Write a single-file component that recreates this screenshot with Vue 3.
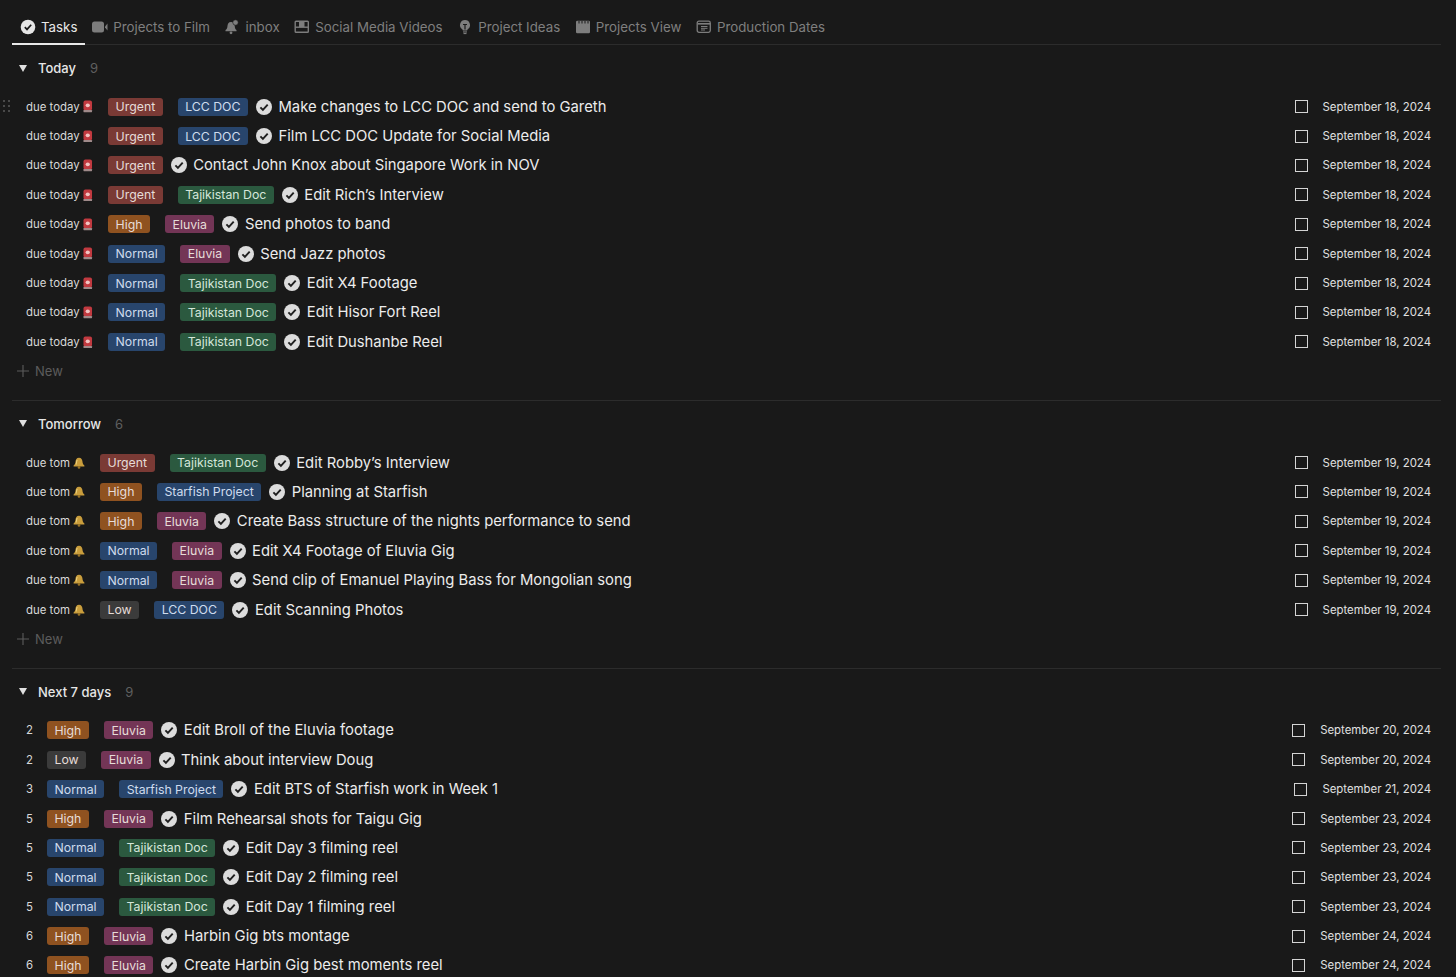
<template>
  <div class="page">
    <nav class="tabs">
      <div v-for="tab in tabs" :key="tab.name" class="tab" :class="{ active: tab.active }">
        <svg class="tab-icon" viewBox="0 0 16 16" v-html="tab.icon"></svg>
        <span>{{ tab.name }}</span>
      </div>
    </nav>

    <section v-for="group in groups" :key="group.name" class="group">
      <header class="group-head">
        <span class="caret"></span>
        <span class="group-name">{{ group.name }}</span>
        <span class="group-count">{{ group.rows.length }}</span>
      </header>

      <div class="rows">
        <div v-for="(row, i) in group.rows" :key="i" class="row">
          <span v-if="group.name === 'Today' && i === 0" class="grip">
            <i></i><i></i><i></i><i></i><i></i><i></i>
          </span>
          <span class="due" :class="{ num: !group.kind }">
            {{ row.due || group.due }}
            <svg v-if="group.kind === 'siren'" class="emoji siren" viewBox="0 0 10 13">
              <rect x="0.5" y="0.5" width="9" height="10.5" rx="2" fill="#c23a40" />
              <ellipse cx="5" cy="5.5" rx="2.2" ry="2" fill="#f2c4c2" />
              <rect x="0.5" y="10.5" width="9" height="2.2" rx="0.5" fill="#a08a8a" />
            </svg>
            <svg v-if="group.kind === 'bell'" class="emoji bell" viewBox="0 0 12 12">
              <path d="M6 .8c2.400 0 3.300 1.800 3.500 4 .1 1.600.6 2.600 1.900 3.800v1H.6v-1c1.300-1.200 1.800-2.200 1.900-3.800C2.700 2.600 3.600.8 6 .8z" fill="#c99d3c" />
              <path d="M4.200 3c-.7 1-.6 3-1 4.500" stroke="#f0d98a" stroke-width="0.9" fill="none" />
              <circle cx="6" cy="10.4" r="1.3" fill="#9a7426" />
            </svg>
          </span>
          <span class="tag" :class="priorityColor[row.p]">{{ row.p }}</span>
          <span v-if="row.t" class="tag project" :class="projectColor[row.t]">{{ row.t }}</span>
          <svg class="check" viewBox="0 0 16 16">
            <circle cx="8" cy="8" r="8" fill="#dcdcdc" />
            <path d="M4.4 8.300l2.500 2.500 4.800-5.200" fill="none" stroke="#1f1f1f" stroke-width="1.9" />
          </svg>
          <span class="title">{{ row.title }}</span>
          <span class="spacer"></span>
          <span class="box"></span>
          <span class="date">{{ row.date || group.date }}</span>
        </div>
      </div>

      <div v-if="group.hasNew" class="new-row">
        <svg class="plus" viewBox="0 0 12 12"><path d="M6 0v12M0 6h12" stroke="#5c5c5c" stroke-width="1.1" /></svg>
        <span>New</span>
      </div>
    </section>
  </div>
</template>

<script setup>
const tabs = [
  {
    name: 'Tasks',
    active: true,
    icon: '<circle cx="8" cy="8" r="7.3" fill="#e6e6e6"/><path d="M4.800 8.200l2.200 2.200 4.200-4.600" fill="none" stroke="#191919" stroke-width="1.7"/>',
  },
  {
    name: 'Projects to Film',
    icon: '<rect x="0" y="2.500" width="12" height="11" rx="2.500" fill="#7d7d7d"/><path d="M13 7.500L15.500 4.500v7L13 8.500z" fill="#7d7d7d"/>',
  },
  {
    name: 'inbox',
    icon: '<path d="M7 3c-2.500 0-3.400 2-3.600 4.500C3.300 9.300 2.500 10.300 1.500 11v1.200h11V11c-1-.7-1.600-1.700-1.700-3.500C10.600 5 9.500 3 7 3z" fill="#7d7d7d"/><circle cx="11.500" cy="3.500" r="2.700" fill="#7d7d7d" stroke="#191919" stroke-width="0.6"/><circle cx="7" cy="13.800" r="1.400" fill="#7d7d7d"/>',
  },
  {
    name: 'Social Media Videos',
    icon: '<rect x="1.200" y="2.200" width="13.100" height="11.100" rx="0.8" fill="none" stroke="#7d7d7d" stroke-width="1.4"/><path d="M1.500 8.200h13" stroke="#7d7d7d" stroke-width="1.4"/><rect x="5" y="2.500" width="5.500" height="5.500" fill="#7d7d7d"/>',
  },
  {
    name: 'Project Ideas',
    icon: '<path d="M8 1a5 5 0 0 0-3 9c.6.500.8 1 .8 1.600h4.400c0-.6.200-1.100.8-1.600a5 5 0 0 0-3-9z" fill="#7d7d7d"/><path d="M6 5.500h4M8 5.500v5" stroke="#191919" stroke-width="1.2"/><rect x="6" y="12.400" width="4" height="1.100" fill="#7d7d7d"/><rect x="6.500" y="14" width="3" height="1.100" fill="#7d7d7d"/>',
  },
  {
    name: 'Projects View',
    icon: '<rect x="1" y="1.800" width="14" height="12.500" rx="1.200" fill="#7d7d7d"/><path d="M4 2v2.500M7 2v2.500M10 2v2.500M13 2v2.500" stroke="#191919" stroke-width="1"/>',
  },
  {
    name: 'Production Dates',
    icon: '<rect x="1.200" y="2.200" width="13.100" height="11.100" rx="1.800" fill="none" stroke="#7d7d7d" stroke-width="1.3"/><path d="M1.500 4.800h13" stroke="#7d7d7d" stroke-width="1.6"/><path d="M5 7.500h6.500M5 9.300h6.500M5 11h4" stroke="#7d7d7d" stroke-width="1"/>',
  },
]

const priorityColor = { Urgent: 'red', High: 'orange', Normal: 'blue', Low: 'gray' }
const projectColor = {
  'LCC DOC': 'blue',
  'Tajikistan Doc': 'green',
  Eluvia: 'pink',
  'Starfish Project': 'blue',
}

const groups = [
  {
    name: 'Today',
    due: 'due today',
    kind: 'siren',
    date: 'September 18, 2024',
    hasNew: true,
    rows: [
      { p: 'Urgent', t: 'LCC DOC', title: 'Make changes to LCC DOC and send to Gareth' },
      { p: 'Urgent', t: 'LCC DOC', title: 'Film LCC DOC Update for Social Media' },
      { p: 'Urgent', title: 'Contact John Knox about Singapore Work in NOV' },
      { p: 'Urgent', t: 'Tajikistan Doc', title: 'Edit Rich’s Interview' },
      { p: 'High', t: 'Eluvia', title: 'Send photos to band' },
      { p: 'Normal', t: 'Eluvia', title: 'Send Jazz photos' },
      { p: 'Normal', t: 'Tajikistan Doc', title: 'Edit X4 Footage' },
      { p: 'Normal', t: 'Tajikistan Doc', title: 'Edit Hisor Fort Reel' },
      { p: 'Normal', t: 'Tajikistan Doc', title: 'Edit Dushanbe Reel' },
    ],
  },
  {
    name: 'Tomorrow',
    due: 'due tom',
    kind: 'bell',
    date: 'September 19, 2024',
    hasNew: true,
    rows: [
      { p: 'Urgent', t: 'Tajikistan Doc', title: 'Edit Robby’s Interview' },
      { p: 'High', t: 'Starfish Project', title: 'Planning at Starfish' },
      { p: 'High', t: 'Eluvia', title: 'Create Bass structure of the nights performance to send' },
      { p: 'Normal', t: 'Eluvia', title: 'Edit X4 Footage of Eluvia Gig' },
      { p: 'Normal', t: 'Eluvia', title: 'Send clip of Emanuel Playing Bass for Mongolian song' },
      { p: 'Low', t: 'LCC DOC', title: 'Edit Scanning Photos' },
    ],
  },
  {
    name: 'Next 7 days',
    rows: [
      { due: '2', p: 'High', t: 'Eluvia', title: 'Edit Broll of the Eluvia footage', date: 'September 20, 2024' },
      { due: '2', p: 'Low', t: 'Eluvia', title: 'Think about interview Doug', date: 'September 20, 2024' },
      { due: '3', p: 'Normal', t: 'Starfish Project', title: 'Edit BTS of Starfish work in Week 1', date: 'September 21, 2024' },
      { due: '5', p: 'High', t: 'Eluvia', title: 'Film Rehearsal shots for Taigu Gig', date: 'September 23, 2024' },
      { due: '5', p: 'Normal', t: 'Tajikistan Doc', title: 'Edit Day 3 filming reel', date: 'September 23, 2024' },
      { due: '5', p: 'Normal', t: 'Tajikistan Doc', title: 'Edit Day 2 filming reel', date: 'September 23, 2024' },
      { due: '5', p: 'Normal', t: 'Tajikistan Doc', title: 'Edit Day 1 filming reel', date: 'September 23, 2024' },
      { due: '6', p: 'High', t: 'Eluvia', title: 'Harbin Gig bts montage', date: 'September 24, 2024' },
      { due: '6', p: 'High', t: 'Eluvia', title: 'Create Harbin Gig best moments reel', date: 'September 24, 2024' },
    ],
  },
]
</script>

<style scoped>
.page {
  height: 977px;
  overflow: hidden;
  padding: 0 15px 0 12px;
  box-sizing: border-box;
  font-family: Inter, "Liberation Sans", sans-serif;
  color: rgba(255, 255, 255, 0.86);
}

.tabs {
  display: flex;
  height: 45px;
  padding-top: 10px;
  box-sizing: border-box;
  border-bottom: 1px solid #2c2c2c;
}

.tab {
  display: flex;
  align-items: center;
  gap: 5px;
  height: 35px;
  padding: 0 7.3px 2px;
  box-sizing: border-box;
  font-size: 13.3px;
  color: #7f7f7f;
  white-space: nowrap;
}

.tab.active {
  color: #e8e8e8;
  border-bottom: 2px solid #e8e8e8;
  padding: 0 7.5px 0 8px;
}

.tab-icon {
  width: 16px;
  height: 16px;
  flex: none;
}

.group {
  border-bottom: 1px solid #2c2c2c;
}

.group:last-child {
  border-bottom: none;
}

.group-head {
  display: flex;
  align-items: center;
  height: 24px;
  margin-top: 11px;
  margin-bottom: 12px;
  padding-left: 7px;
  font-size: 13px;
}

.caret {
  width: 0;
  height: 0;
  border-left: 4px solid transparent;
  border-right: 4px solid transparent;
  border-top: 7px solid #e0e0e0;
  margin-right: 11px;
}

.group-name {
  color: #e6e6e6;
  font-weight: 500;
}

.group-count {
  margin-left: 14px;
  color: #5f5f5f;
}

.row {
  display: flex;
  align-items: center;
  height: 29.4px;
  position: relative;
  padding-left: 14px;
  padding-right: 10px;
}

.grip {
  position: absolute;
  left: -9px;
  top: 8px;
  display: grid;
  grid-template-columns: 2px 2px;
  gap: 3px;
}

.grip i {
  width: 2px;
  height: 2px;
  border-radius: 50%;
  background: #5a5a5a;
}

.due {
  display: flex;
  align-items: center;
  gap: 3.5px;
  margin-right: 15.5px;
  font-size: 11.4px;
  color: #d8d8d8;
  white-space: nowrap;
}

.due.num {
  margin-right: 14px;
}

.emoji.siren {
  width: 9.5px;
  height: 12.5px;
}

.emoji.bell {
  width: 12px;
  height: 12px;
  margin-right: -1px;
}

.tag {
  display: flex;
  align-items: center;
  height: 18px;
  padding: 0 7.5px;
  border-radius: 3px;
  font-size: 12.3px;
  white-space: nowrap;
  color: #e6dcd8;
}

.project {
  margin-left: 15px;
}

.red { background: #7a3a35; }
.orange { background: #8f5220; }
.blue { background: #28456c; color: #cfdcee; }
.green { background: #2b593f; color: #d4e6da; }
.pink { background: #733556; }
.gray { background: #3b3b3b; }

.check {
  width: 16px;
  height: 16px;
  flex: none;
  margin-left: 8px;
}

.title {
  margin-left: 6.5px;
  font-size: 14.8px;
  color: #ececec;
  white-space: nowrap;
}

.spacer {
  flex: 1;
}

.box {
  width: 13px;
  height: 13px;
  box-sizing: border-box;
  border: 1.5px solid #d4d4d4;
  margin-right: 15px;
}

.date {
  font-size: 11.4px;
  color: #e0e0e0;
  white-space: nowrap;
}

.new-row {
  display: flex;
  align-items: center;
  height: 29.4px;
  padding-left: 5px;
  margin-bottom: 14px;
  gap: 6px;
  font-size: 13px;
  color: #5c5c5c;
}

.plus {
  width: 12px;
  height: 12px;
}
</style>

<style>
body {
  background: #191919;
  overflow: hidden;
}
</style>
